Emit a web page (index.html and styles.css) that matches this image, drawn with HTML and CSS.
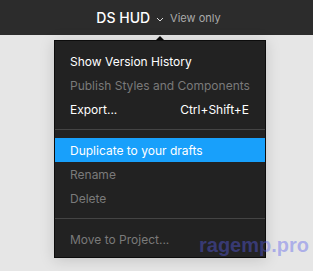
FILE: index.html
```html
<!DOCTYPE html>
<html lang="en">
<head>
  <meta charset="UTF-8">
  <title>DS HUD</title>
  <link rel="stylesheet" href="styles.css">
</head>
<body>

  <div class="topbar">
    <span class="titulo">DS HUD</span>
    <svg class="chevron" width="8" height="5" viewBox="0 0 8 5"><path d="M1 1 L4 4 L7 1" fill="none" stroke="#ddd" stroke-width="1"/></svg>
    <span class="modo">View only</span>
  </div>

  <div class="area">
    <div class="menu">
      <div class="item">Show Version History</div>
      <div class="item off">Publish Styles and Components</div>
      <div class="item"><span>Export...</span><span>Ctrl+Shift+E</span></div>
      <div class="sep"></div>
      <div class="item ativo">Duplicate to your drafts</div>
      <div class="item off">Rename</div>
      <div class="item off">Delete</div>
      <div class="sep"></div>
      <div class="item off">Move to Project...</div>
    </div>
  </div>

  <div class="marca">ragemp.pro</div>

</body>
</html>
```

FILE: styles.css
```css
* {
  box-sizing: border-box;
}

body {
  margin: 0;
  background: #e6e6e6;
  font-family: 'Inter', 'Noto Sans', sans-serif;
  height: 271px;
  overflow: hidden;
}

.topbar {
  height: 35px;
  background: #2c2c2c;
  display: flex;
  align-items: center;
  justify-content: center;
  padding-left: 4px;
}

.titulo {
  color: #fff;
  font-size: 14px;
  font-weight: 500;
}

.chevron {
  margin: 3px 6px 0 6px;
}

.modo {
  color: #aaa;
  font-size: 11px;
}

.area {
  padding: 5px 0 0 54px;
}

.menu {
  position: relative;
  width: 212px;
  background: #222;
  border: 1px solid #0c0c0c;
  padding: 8px 0 6px;
  box-shadow: 0 2px 14px rgba(0, 0, 0, 0.15);
}

.menu::before {
  content: "";
  position: absolute;
  top: -5px;
  left: 100px;
  border-left: 5px solid transparent;
  border-right: 5px solid transparent;
  border-bottom: 5px solid #0c0c0c;
}

.item {
  height: 24px;
  display: flex;
  align-items: center;
  justify-content: space-between;
  padding: 0 16px 0 15px;
  color: #fff;
  font-size: 12px;
  white-space: nowrap;
}

.item.off {
  color: #7a7a7a;
}

.item.ativo {
  background: #18a0fb;
}

.sep {
  height: 1px;
  background: #444;
  margin: 8px 0;
}

.marca {
  position: absolute;
  left: 199px;
  top: 234px;
  font-family: 'Liberation Sans', sans-serif;
  font-weight: bold;
  font-size: 20px;
  color: rgba(90, 95, 235, 0.42);
}
```
